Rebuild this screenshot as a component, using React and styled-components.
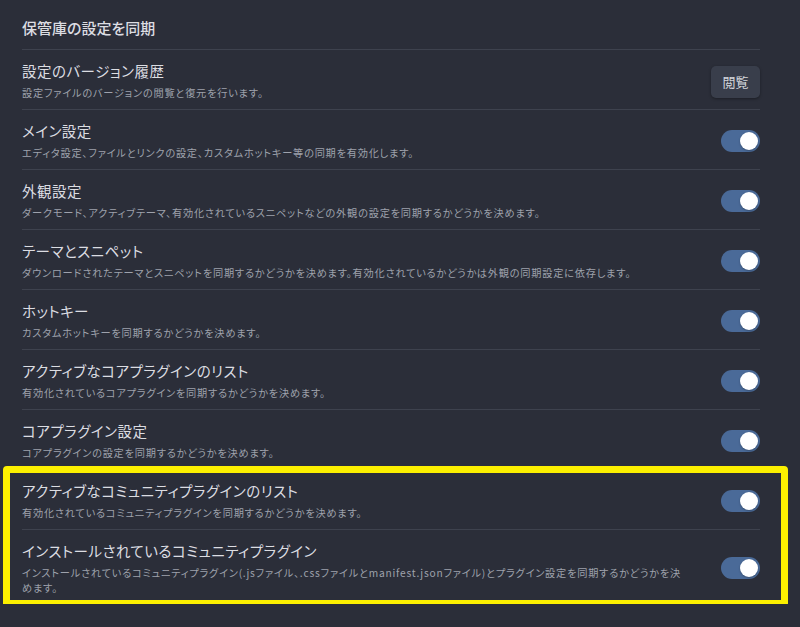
import styled, { createGlobalStyle } from 'styled-components';

const GlobalStyle = createGlobalStyle`
  html, body {
    margin: 0;
    padding: 0;
    background: #2b2e39;
  }
  body {
    font-family: 'Noto Sans CJK JP', 'Noto Sans', sans-serif;
    font-feature-settings: 'palt';
  }
`;

const settings = [
  {
    title: 'メイン設定',
    desc: 'エディタ設定、ファイルとリンクの設定、カスタムホットキー等の同期を有効化します。',
  },
  {
    title: '外観設定',
    desc: 'ダークモード、アクティブテーマ、有効化されているスニペットなどの外観の設定を同期するかどうかを決めます。',
  },
  {
    title: 'テーマとスニペット',
    desc: 'ダウンロードされたテーマとスニペットを同期するかどうかを決めます。有効化されているかどうかは外観の同期設定に依存します。',
  },
  {
    title: 'ホットキー',
    desc: 'カスタムホットキーを同期するかどうかを決めます。',
  },
  {
    title: 'アクティブなコアプラグインのリスト',
    desc: '有効化されているコアプラグインを同期するかどうかを決めます。',
  },
  {
    title: 'コアプラグイン設定',
    desc: 'コアプラグインの設定を同期するかどうかを決めます。',
  },
];

const community = [
  {
    title: 'アクティブなコミュニティプラグインのリスト',
    desc: '有効化されているコミュニティプラグインを同期するかどうかを決めます。',
  },
  {
    title: 'インストールされているコミュニティプラグイン',
    desc: 'インストールされているコミュニティプラグイン(.jsファイル、.cssファイルとmanifest.jsonファイル)とプラグイン設定を同期するかどうかを決めます。',
  },
];

export default function App() {
  return (
    <>
      <GlobalStyle />
      <Page>
        <Heading>保管庫の設定を同期</Heading>
        <Row>
          <Info>
            <Title>設定のバージョン履歴</Title>
            <Desc>設定ファイルのバージョンの閲覧と復元を行います。</Desc>
          </Info>
          <Button>閲覧</Button>
        </Row>
        {settings.map((s) => (
          <SettingRow key={s.title} s={s} />
        ))}
        <Highlight>
          {community.map((s) => (
            <SettingRow key={s.title} s={s} />
          ))}
        </Highlight>
      </Page>
    </>
  );
}

function SettingRow({ s }) {
  return (
    <Row>
      <Info>
        <Title>{s.title}</Title>
        <Desc>{s.desc}</Desc>
      </Info>
      <Toggle>
        <Knob />
      </Toggle>
    </Row>
  );
}

const Page = styled.div`
  width: 738px;
  padding: 0 0 0 22px;
`;

const Heading = styled.div`
  padding: 18px 0 11px;
  line-height: 20px;
  font-size: 15px;
  font-weight: 500;
  color: #dcdde2;
`;

const Row = styled.div`
  display: flex;
  align-items: center;
  gap: 34px;
  border-top: 1px solid #3e424e;
  padding: 11px 0 9px;
`;

const Info = styled.div`
  flex: 1;
  min-width: 0;
`;

const Title = styled.div`
  font-size: 14.5px;
  line-height: 20px;
  letter-spacing: 0.5px;
  color: #dcdde2;
`;

const Desc = styled.div`
  margin-top: 4px;
  font-size: 10.2px;
  line-height: 15px;
  letter-spacing: 0.78px;
  color: #9ea2ac;
`;

const Button = styled.button`
  flex: none;
  width: 49px;
  height: 32px;
  margin-top: 2px;
  border: none;
  border-radius: 5px;
  background: #393e4b;
  box-shadow: 0 1px 3px rgba(0, 0, 0, 0.35);
  color: #d4d6dc;
  font-family: inherit;
  font-size: 13px;
  font-feature-settings: 'palt';
`;

const Toggle = styled.div`
  flex: none;
  width: 39px;
  height: 22px;
  border-radius: 11px;
  background: #4a6a98;
  display: flex;
  align-items: center;
  justify-content: flex-end;
  padding: 0 2px;
  box-sizing: border-box;
`;

const Knob = styled.div`
  width: 18px;
  height: 18px;
  border-radius: 50%;
  background: #ffffff;
  box-shadow: 0 1px 2px rgba(0, 0, 0, 0.25);
`;

const Highlight = styled.div`
  position: relative;

  &::after {
    content: '';
    position: absolute;
    top: -3px;
    left: -19px;
    right: -28px;
    bottom: -3px;
    border: 7px solid #fcf000;
    border-radius: 4px;
    pointer-events: none;
  }
`;
